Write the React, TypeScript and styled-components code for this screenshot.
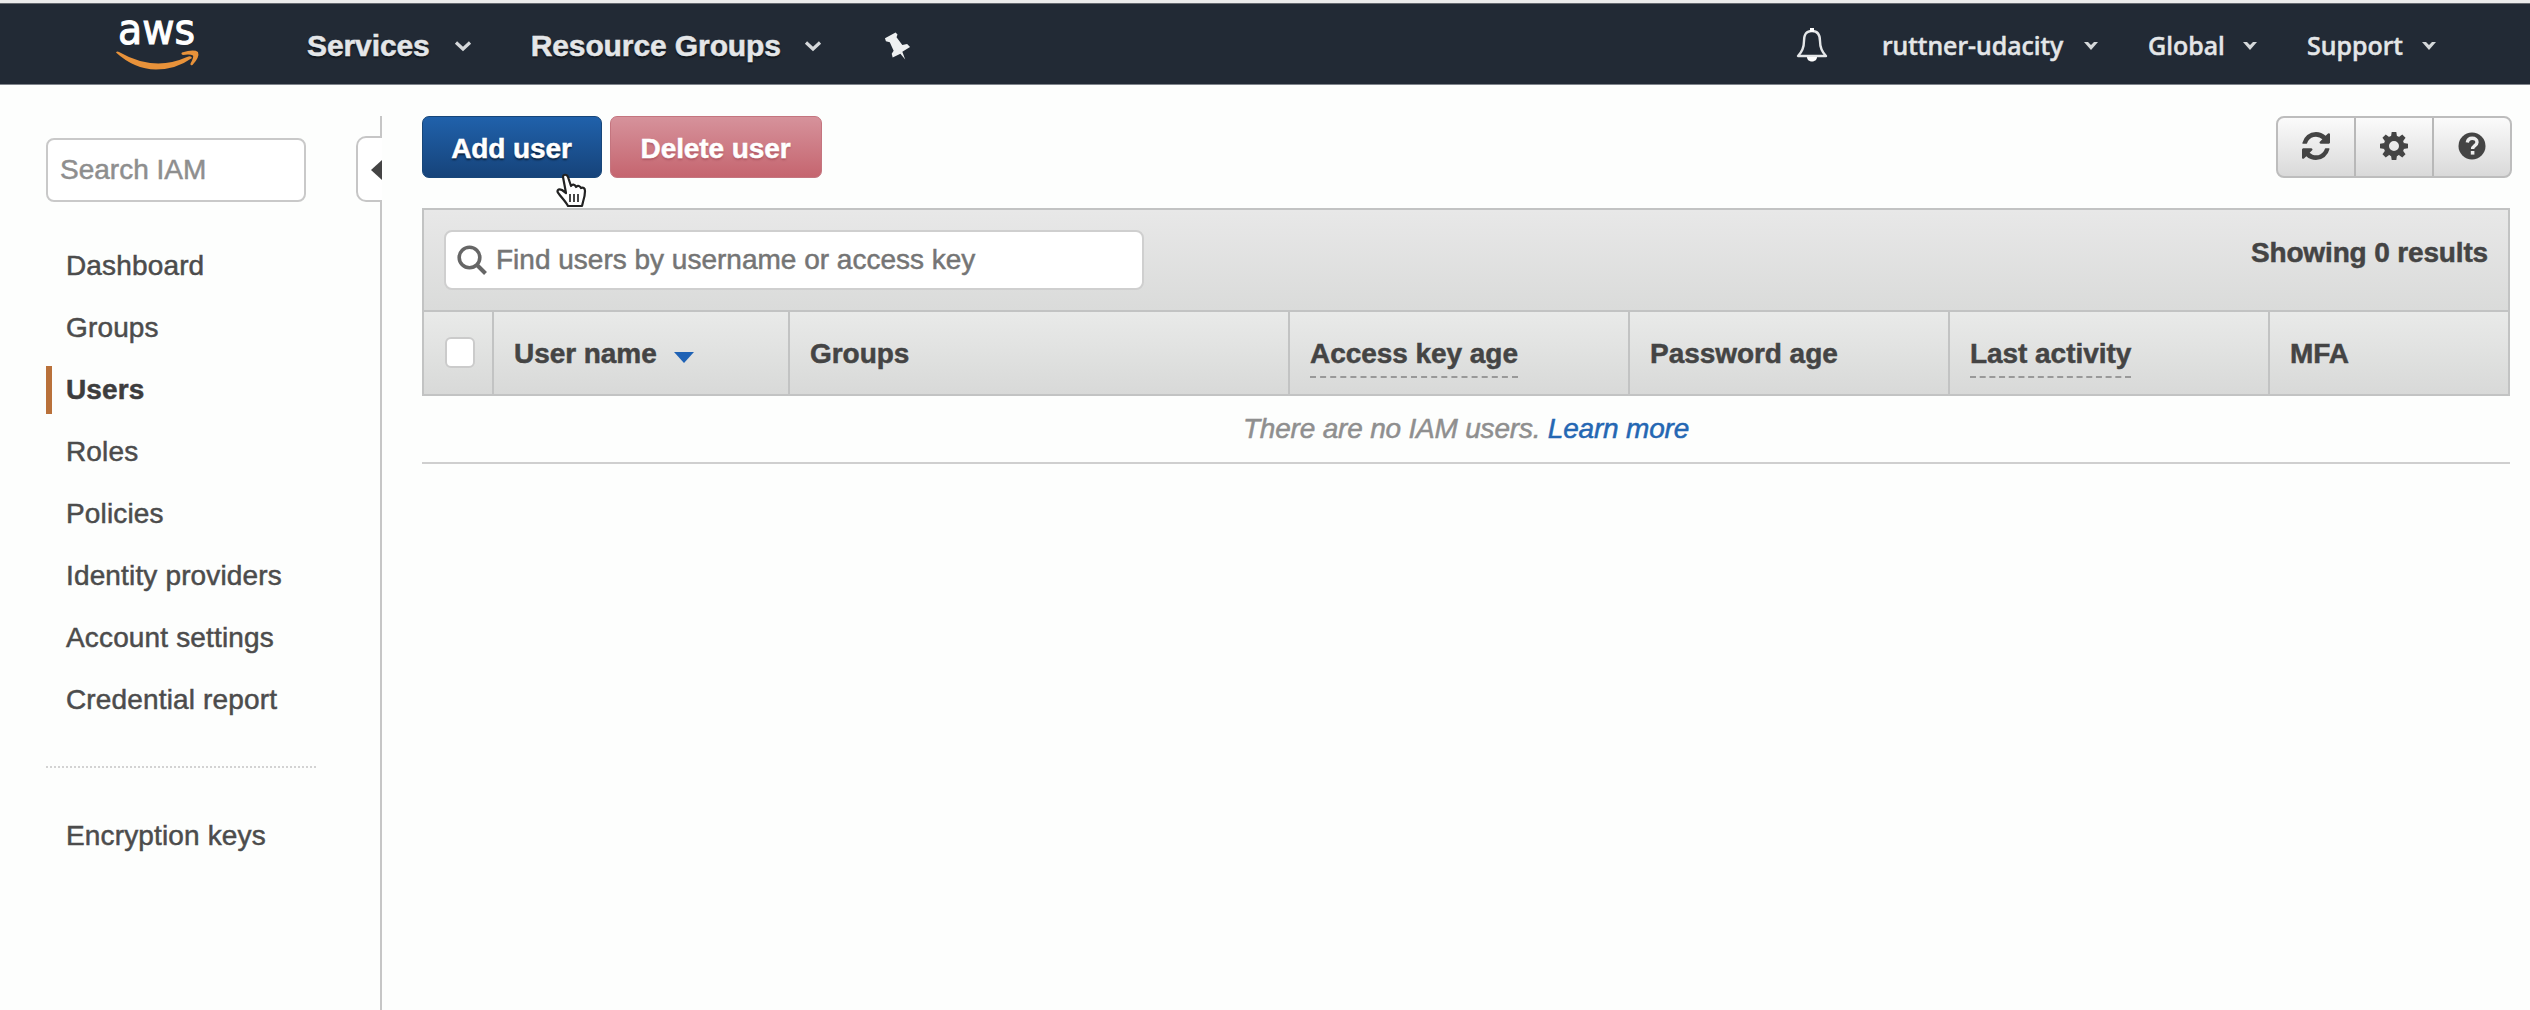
import React from "react";
import styled, { createGlobalStyle } from "styled-components";

const GlobalStyle = createGlobalStyle`
  * { box-sizing: border-box; }
  body {
    margin: 0;
    background: #fdfefd;
    color: #444;
    font-family: "Liberation Sans", Arial, Helvetica, sans-serif;
    font-size: 28px;
    line-height: 32px;
    -webkit-text-stroke-width: 0.5px;
  }
`;

const Page = styled.div`
  display: flex;
  flex-direction: column;
  height: 1010px;
  overflow: hidden;
`;

const TopBar = styled.header`
  flex: none;
  display: flex;
  align-items: flex-start;
  height: 85px;
  padding-left: 116px;
  background: #222a35;
  border-top: 3px solid #ececec;
  border-bottom: 1px solid #80858c;
  box-shadow: inset 0 1px 0 #666a70;
  color: #e4e6e8;
`;

const Logo = styled.div`
  width: 191px;
  height: 80px;
  svg { display: block; overflow: visible; }
`;

const MainNav = styled.nav`
  display: flex;
  align-items: center;
  height: 80px;
  padding-top: 5px;
  font-size: 30px;
  font-weight: bold;
  letter-spacing: -0.1px;
  text-shadow: 0 2px 2px #0008;
`;

const NavItem = styled.a<{ $gap: number; $after: number }>`
  display: flex;
  align-items: center;
  gap: ${(p) => p.$gap}px;
  margin-right: ${(p) => p.$after}px;
  white-space: nowrap;
`;

const AccountNav = styled(MainNav)`
  margin-left: auto;
  padding-top: 3px;
  padding-right: 94px;
  font-family: "Noto Sans", "Open Sans", sans-serif;
  font-size: 25px;
  font-weight: 500;
  letter-spacing: 0;
  text-shadow: none;
`;

const AccountItem = styled.a<{ $width: number; $before?: number }>`
  display: flex;
  align-items: center;
  justify-content: space-between;
  width: ${(p) => p.$width}px;
  margin-left: ${(p) => p.$before ?? 50}px;
  white-space: nowrap;
  svg { margin-top: 2px; }
`;

const Body = styled.div`
  flex: 1;
  display: flex;
  min-height: 0;
`;

const Sidebar = styled.aside`
  width: 356px;
  padding: 53px 40px 0 46px;
`;

const SearchBox = styled.div`
  width: 260px;
  height: 64px;
  padding: 14px 12px;
  border: 2px solid #c9c9c9;
  border-radius: 8px;
  background: #fff;
  color: #8e8e8e;
  margin-bottom: 40px;
`;

const Menu = styled.ul`
  list-style: none;
  margin: 0;
  padding: 0;
  display: flex;
  flex-direction: column;
  gap: 14px;
  letter-spacing: 0.15px;
`;

const MenuItem = styled.li<{ $active?: boolean }>`
  height: 48px;
  padding: 0 0 0 14px;
  line-height: 48px;
  border-left: 6px solid ${(p) => (p.$active ? "#b9713a" : "transparent")};
  font-weight: ${(p) => (p.$active ? "bold" : "normal")};
  color: ${(p) => (p.$active ? "#3d3d3d" : "#4c4c4c")};
`;

const Divider = styled.hr`
  width: 270px;
  margin: 42px 0 44px;
  border: 0;
  border-top: 2px dotted #d3d3d3;
`;

const Rail = styled.div`
  width: 26px;
  display: flex;
  flex-direction: column;
  padding-top: 31px;
`;

const RailLine = styled.div<{ $height?: number }>`
  ${(p) => (p.$height ? `height: ${p.$height}px;` : "flex: 1;")}
  border-right: 2px solid #c6c6c6;
`;

const CollapseTab = styled.button`
  height: 66px;
  padding: 2px 0 0;
  display: flex;
  align-items: center;
  justify-content: flex-end;
  background: #fff;
  border: 2px solid #c6c6c6;
  border-right: 0;
  border-radius: 10px 0 0 10px;
`;

const Content = styled.main`
  flex: 1;
  padding: 31px 18px 0 40px;
`;

const ActionBar = styled.div`
  display: flex;
  height: 62px;
  gap: 8px;
  margin-bottom: 30px;
`;

const ActionButton = styled.button<{ $danger?: boolean }>`
  height: 62px;
  width: ${(p) => (p.$danger ? 212 : 180)}px;
  padding: 3px 1px 0 0;
  border: 1px solid ${(p) => (p.$danger ? "#c4757f" : "#174679")};
  border-radius: 7px;
  background: ${(p) =>
    p.$danger
      ? "linear-gradient(#d6929b, #c5656f)"
      : "linear-gradient(#2061ab, #16437a)"};
  color: #fff;
  font: bold 28px "Liberation Sans", Arial, sans-serif;
  letter-spacing: -0.1px;
  text-shadow: 0 2px 2px ${(p) => (p.$danger ? "#8a303c66" : "#0009")};
`;

const ToolGroup = styled.div`
  display: flex;
  width: 236px;
  margin-left: auto;
  border: 2px solid #bdbdbd;
  border-radius: 8px;
  background: linear-gradient(#fbfbfb, #d9d9d9);
`;

const ToolButton = styled.button`
  flex: 1;
  display: grid;
  place-items: center;
  padding: 0 0 2px;
  border: 0;
  background: none;
  & + & { border-left: 2px solid #b8b8b8; }
`;

const Panel = styled.section`
  width: 2088px;
  border-bottom: 2px solid #cfcfcf;
`;

const FilterBar = styled.div`
  display: flex;
  justify-content: space-between;
  height: 104px;
  padding: 20px 20px 0 20px;
  border: 2px solid #c2c3c3;
  background: linear-gradient(#e8e8e8, #dadbda);
`;

const FilterInput = styled.div`
  display: flex;
  align-items: center;
  gap: 9px;
  width: 700px;
  height: 60px;
  padding: 0 11px;
  border: 2px solid #cfcfcf;
  border-radius: 8px;
  background: #fff;
  color: #757575;
`;

const ResultCount = styled.div`
  padding-top: 7px;
  font-weight: bold;
  letter-spacing: -0.15px;
  color: #444;
`;

const HeadRow = styled.div`
  display: grid;
  grid-template-columns: 68px 296px 500px 340px 320px 320px 1fr;
  height: 84px;
  border: 2px solid #c2c3c3;
  border-top: 0;
  background: linear-gradient(#e9eae9, #d8d9d8);
`;

const HeadCell = styled.div`
  display: flex;
  align-items: flex-start;
  padding: 26px 0 0 21px;
  font-weight: bold;
  letter-spacing: -0.05px;
  color: #444;
  & + & { border-left: 2px solid #c2c3c3; padding-left: 20px; }
`;

const HeadLabel = styled.span<{ $hint?: boolean }>`
  height: 40px;
  border-bottom: ${(p) => (p.$hint ? "2px dashed #999" : "0")};
`;

const SortCaret = styled.span`
  margin: 14px 0 0 17px;
  border: 10px solid transparent;
  border-top: 11px solid #1f62b5;
  border-bottom: 0;
`;

const Checkbox = styled.span`
  width: 30px;
  height: 31px;
  margin-top: -1px;
  border: 2px solid #cbcbcb;
  border-radius: 6px;
  background: #fff;
`;

const EmptyRow = styled.div`
  height: 66px;
  padding-top: 17px;
  text-align: center;
  font-style: italic;
  letter-spacing: -0.2px;
  color: #8f8f8f;
`;

const Link = styled.a`
  color: #2467b3;
`;

const Pointer = styled.svg`
  position: absolute;
  left: 555px;
  top: 173px;
`;

const Chevron = () => (
  <svg width="18" height="12" viewBox="0 0 18 12">
    <path d="M2 2.500 9 9l7-6.500" fill="none" stroke="#d5d8da" strokeWidth="3.200" />
  </svg>
);

const SmallCaret = () => (
  <svg width="14" height="10" viewBox="0 0 14 10">
    <path d="M0 1h4L7 4 10 1H14L7 9z" fill="#d5d8da" />
  </svg>
);

const menu = [
  "Dashboard",
  "Groups",
  "Users",
  "Roles",
  "Policies",
  "Identity providers",
  "Account settings",
  "Credential report",
];

export default function App() {
  return (
    <Page>
      <GlobalStyle />
      <TopBar>
        <Logo>
          <svg width="84" height="72" viewBox="0 0 84 72">
            <text x="2" y="41" textLength="77" lengthAdjust="spacingAndGlyphs" fontFamily="DejaVu Sans Condensed, DejaVu Sans, sans-serif" fontSize="43" fill="#fff" stroke="#fff" strokeWidth="1">aws</text>
            <path d="M0 49.500Q1 48 3 49Q38 69 71 54Q75 52 76 55Q60 66.500 40 66.500Q18 66 0 49.500z" fill="#e8923a" />
            <path d="M66 49.500Q78 46 82 49Q84 54 76.500 62Q74 63 74.500 60.500Q78 54 77 52.500Q74 51 67 52Q64.500 51 66 49.500z" fill="#e8923a" />
          </svg>
        </Logo>
        <MainNav>
          <NavItem $gap={24} $after={59}>Services <Chevron /></NavItem>
          <NavItem $gap={23} $after={62}>Resource Groups <Chevron /></NavItem>
          <svg width="27" height="30" viewBox="0 0 28 30">
            <path d="M1 7 12 1l2 2-1 3 6 8 5-1 3 3-8 5 3 8-5-6-8 4-1-4 2-3-4-9-4-1z" fill="#eef0f1" />
          </svg>
        </MainNav>
        <AccountNav>
          <svg width="34" height="36" viewBox="0 0 34 36">
            <path d="M17 4C10 4 9 9 9 14c0 7-2 11-6 15h28c-4-4-6-8-6-15 0-5-1-10-8-10z" fill="none" stroke="#e4e6e8" strokeWidth="2.400" strokeLinejoin="round" />
            <path d="M15 1h4v4h-4zM12 30h10c0 6-10 6-10 0z" fill="#fff" />
          </svg>
          <AccountItem $width={216} $before={53}>ruttner-udacity <SmallCaret /></AccountItem>
          <AccountItem $width={109}>Global <SmallCaret /></AccountItem>
          <AccountItem $width={129}>Support <SmallCaret /></AccountItem>
        </AccountNav>
      </TopBar>
      <Body>
        <Sidebar>
          <SearchBox>Search IAM</SearchBox>
          <Menu>
            {menu.map((m) => (
              <MenuItem key={m} $active={m === "Users"}>{m}</MenuItem>
            ))}
          </Menu>
          <Divider />
          <Menu>
            <MenuItem>Encryption keys</MenuItem>
          </Menu>
        </Sidebar>
        <Rail>
          <RailLine $height={20} />
          <CollapseTab>
            <svg width="11" height="20" viewBox="0 0 11 20"><path d="M11 0v20L0 10z" fill="#444" /></svg>
          </CollapseTab>
          <RailLine />
        </Rail>
        <Content>
          <ActionBar>
            <ActionButton>Add user</ActionButton>
            <ActionButton $danger>Delete user</ActionButton>
            <ToolGroup>
              <ToolButton>
                <svg width="28" height="28" viewBox="0 0 1536 1536">
                  <path fill="#444" d="M1511 928q0 5-1 7-64 268-268 434.500t-478 166.500q-146 0-282.500-55t-243.500-157l-129 129q-19 19-45 19t-45-19-19-45v-448q0-26 19-45t45-19h448q26 0 45 19t19 45-19 45l-137 137q71 66 161 102t187 36q134 0 250-65t186-179q11-17 53-117 8-23 30-23h192q13 0 22.500 9.500t9.500 22.500zm25-800v448q0 26-19 45t-45 19h-448q-26 0-45-19t-19-45 19-45l138-138q-148-137-349-137-134 0-250 65t-186 179q-11 17-53 117-8 23-30 23h-199q-13 0-22.500-9.500t-9.500-22.500v-7q65-268 270-434.500t480-166.500q146 0 284 55.500t245 156.500l130-129q19-19 45-19t45 19 19 45z" />
                </svg>
              </ToolButton>
              <ToolButton>
                <svg width="28" height="28" viewBox="-14 -14 28 28">
                  <circle r="7.700" fill="none" stroke="#444" strokeWidth="5.400" />
                  {[0, 45, 90, 135, 180, 225, 270, 315].map((a) => (
                    <path key={a} d="M-3-9.500-2.300-14h4.600L3-9.500z" fill="#444" transform={`rotate(${a})`} />
                  ))}
                </svg>
              </ToolButton>
              <ToolButton>
                <svg width="28" height="28" viewBox="0 0 28 28">
                  <circle cx="14" cy="14" r="13.500" fill="#444" />
                  <path d="M9.300 10.500c.5-3 2.300-4.200 4.900-4.200 2.800 0 4.800 1.500 4.800 4 0 3.300-4.400 3.300-4.400 6.700" fill="none" stroke="#ededed" strokeWidth="3.400" />
                  <path d="M12.800 19h3.600v3.600h-3.600z" fill="#ededed" />
                </svg>
              </ToolButton>
            </ToolGroup>
          </ActionBar>
          <Panel>
            <FilterBar>
              <FilterInput>
                <svg width="30" height="30" viewBox="0 0 30 30">
                  <circle cx="12.500" cy="12.500" r="10.300" fill="none" stroke="#666" strokeWidth="3.600" />
                  <path d="m20 20 8.500 8.500" stroke="#666" strokeWidth="4" />
                </svg>
                Find users by username or access key
              </FilterInput>
              <ResultCount>Showing 0 results</ResultCount>
            </FilterBar>
            <HeadRow>
              <HeadCell><Checkbox /></HeadCell>
              <HeadCell><HeadLabel>User name</HeadLabel><SortCaret /></HeadCell>
              <HeadCell><HeadLabel>Groups</HeadLabel></HeadCell>
              <HeadCell><HeadLabel $hint>Access key age</HeadLabel></HeadCell>
              <HeadCell><HeadLabel>Password age</HeadLabel></HeadCell>
              <HeadCell><HeadLabel $hint>Last activity</HeadLabel></HeadCell>
              <HeadCell><HeadLabel>MFA</HeadLabel></HeadCell>
            </HeadRow>
            <EmptyRow>There are no IAM users. <Link>Learn more</Link></EmptyRow>
          </Panel>
        </Content>
      </Body>
      <Pointer width="32" height="36" viewBox="0 0 32 36">
        <path d="M8 4c0-3 4-3 5 0l3 9c1-2 4-2 5 1 2-2 4-1 5 1 2-1 4 0 4 3 0 5-1 8-2 11l-1 4H13c-2-4-6-8-9-12-3-3-1-6 3-4l4 3z" fill="#fff" stroke="#222" strokeWidth="2.200" strokeLinejoin="round" />
        <path d="M15 21v8M19 21v8M23 21v8" stroke="#333" strokeWidth="1.800" />
      </Pointer>
    </Page>
  );
}
